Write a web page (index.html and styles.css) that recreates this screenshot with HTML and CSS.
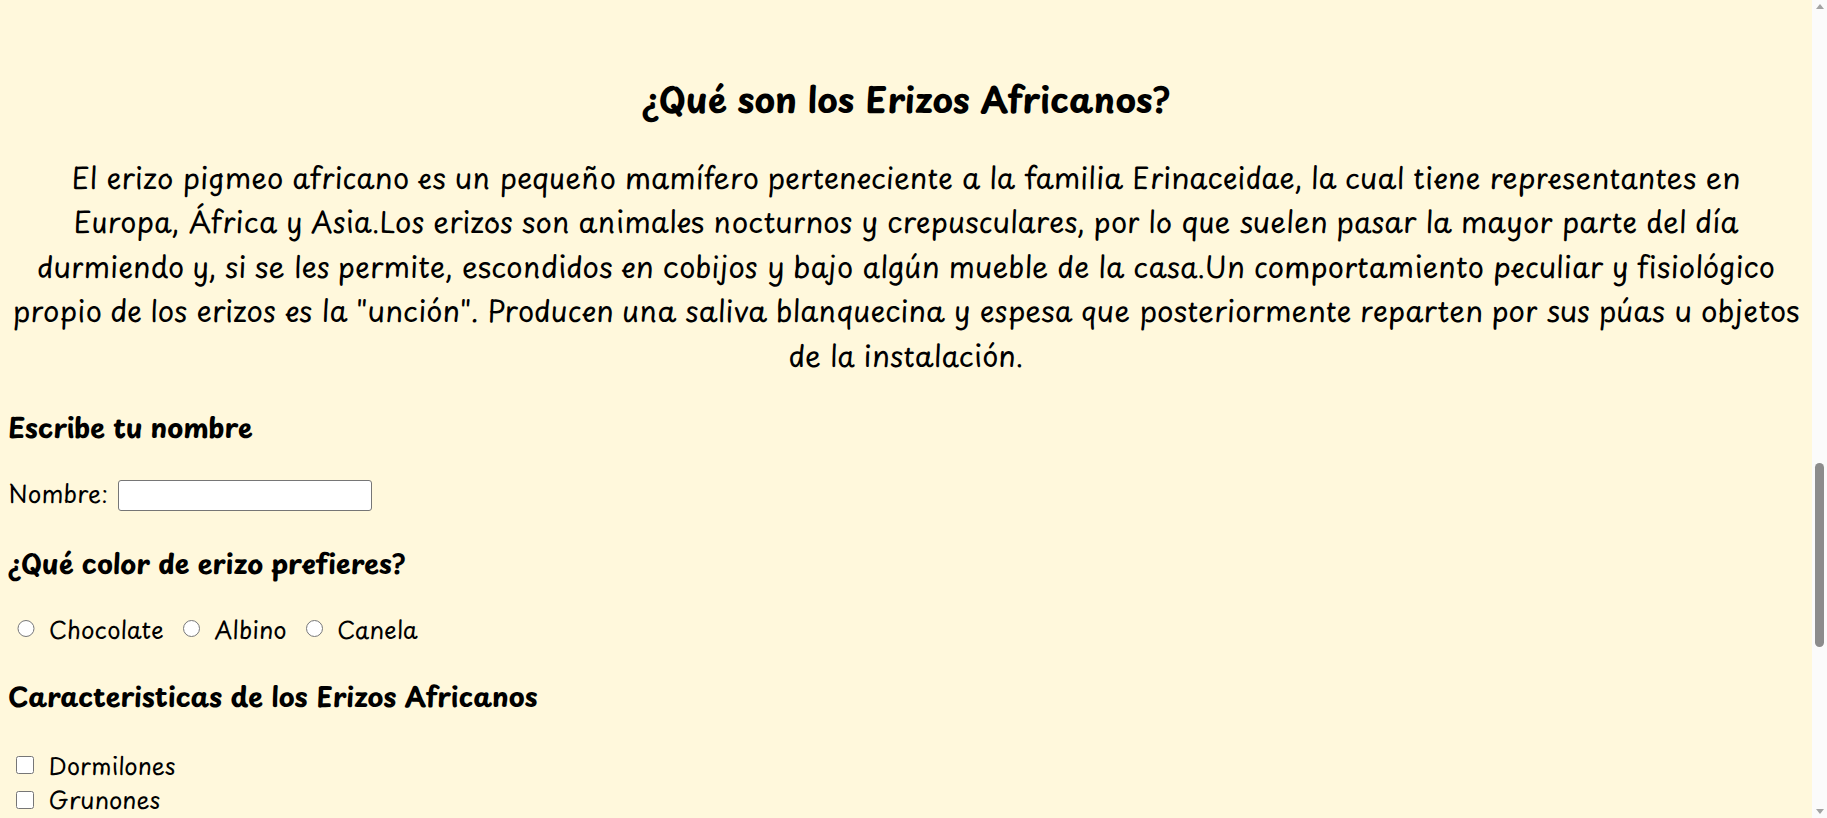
FILE: index.html
```html
<!DOCTYPE html>
<html lang="es">
<head>
<meta charset="utf-8">
<title>Erizos Africanos</title>
<link rel="stylesheet" href="styles.css">
</head>
<body>
<main class="page">
  <section class="intro">
    <h2 class="title">¿Qué son los Erizos Africanos?</h2>
    <p class="text">El erizo pigmeo africano es un pequeño mamífero perteneciente a la familia Erinaceidae, la cual tiene representantes en<br>
Europa, África y Asia.Los erizos son animales nocturnos y crepusculares, por lo que suelen pasar la mayor parte del día<br>
durmiendo y, si se les permite, escondidos en cobijos y bajo algún mueble de la casa.Un comportamiento peculiar y fisiológico<br>
propio de los erizos es la "unción". Producen una saliva blanquecina y espesa que posteriormente reparten por sus púas u objetos<br>
de la instalación.</p>
  </section>
  <form class="form">
    <h3 class="form-title title-name">Escribe tu nombre</h3>
    <label class="field"><span class="field-label">Nombre:</span><input class="field-input" type="text" name="nombre"></label>
    <h3 class="form-title title-color">¿Qué color de erizo prefieres?</h3>
    <div class="radios">
      <label class="choice"><input class="radio" type="radio" name="color" value="chocolate"><span>Chocolate</span></label>
      <label class="choice"><input class="radio" type="radio" name="color" value="albino"><span>Albino</span></label>
      <label class="choice"><input class="radio" type="radio" name="color" value="canela"><span>Canela</span></label>
    </div>
    <h3 class="form-title title-traits">Caracteristicas de los Erizos Africanos</h3>
    <div class="checks">
      <label class="check"><input class="checkbox" type="checkbox" name="dormilones"><span>Dormilones</span></label>
      <label class="check"><input class="checkbox" type="checkbox" name="grunones"><span>Grunones</span></label>
    </div>
  </form>
</main>
<div class="scrollbar" aria-hidden="true">
  <span class="sb-arrow sb-up"></span>
  <span class="sb-thumb"></span>
  <span class="sb-arrow sb-down"></span>
</div>
</body>
</html>
```
FILE: styles.css
```css
html {
  background: #fff8dc;
}
body {
  margin: 0 23px 0 8px;
  background: #fff8dc;
  color: #000;
  font-family: "Playpen Sans", "Comic Neue", sans-serif;
}
.page {
  display: flex;
  flex-direction: column;
}
.intro {
  padding-top: 73.5px;
  text-align: center;
}
.title {
  margin: 0;
  font-size: 34.9px;
  line-height: 50px;
  font-weight: 700;
}
.text {
  margin: 31px 0 0;
  font-size: 29.1px;
  line-height: 44.5px;
  white-space: nowrap;
}
.form {
  display: flex;
  flex-direction: column;
  align-items: flex-start;
}
.form-title {
  margin: 0;
  font-size: 27px;
  line-height: 36px;
  font-weight: 700;
}
.title-name {
  margin-top: 31.5px;
}
.title-color {
  margin-top: 33.5px;
}
.title-traits {
  margin-top: 34.6px;
}
.field {
  margin-top: 35.7px;
  display: flex;
  align-items: center;
  gap: 10px;
  height: 31px;
  font-size: 24px;
}
.field-label {
  padding-bottom: 5px;
}
.field-input {
  box-sizing: border-box;
  width: 254px;
  height: 31px;
  margin: 0;
  border: 1px solid #767676;
  border-radius: 3px;
  background: #fff;
}
.radios {
  margin-top: 33px;
  display: flex;
  align-items: center;
  gap: 19px;
  height: 30px;
  padding-left: 9.3px;
  font-size: 24px;
}
.choice {
  display: flex;
  align-items: center;
  gap: 14px;
}
.radio {
  width: 17.4px;
  height: 17.4px;
  margin: 0;
}
.checks {
  margin-top: 33.5px;
  display: flex;
  flex-direction: column;
  font-size: 23.5px;
}
.check {
  display: flex;
  align-items: center;
  gap: 15px;
  height: 34.5px;
  padding-left: 7.5px;
}
.checkbox {
  width: 18px;
  height: 18px;
  margin: 0;
}
.scrollbar {
  position: fixed;
  top: 0;
  right: 0;
  width: 15px;
  height: 100vh;
  background: #fbfbfb;
}
.sb-thumb {
  position: absolute;
  top: 463px;
  left: 3px;
  width: 9px;
  height: 184px;
  border-radius: 5px;
  background: #8c8c8c;
}
.sb-arrow {
  position: absolute;
  left: 3.5px;
  width: 0;
  height: 0;
  border-left: 4px solid transparent;
  border-right: 4px solid transparent;
}
.sb-up {
  top: 4px;
  border-bottom: 5px solid #a3a3a3;
}
.sb-down {
  bottom: 4px;
  border-top: 5px solid #a3a3a3;
}
```
